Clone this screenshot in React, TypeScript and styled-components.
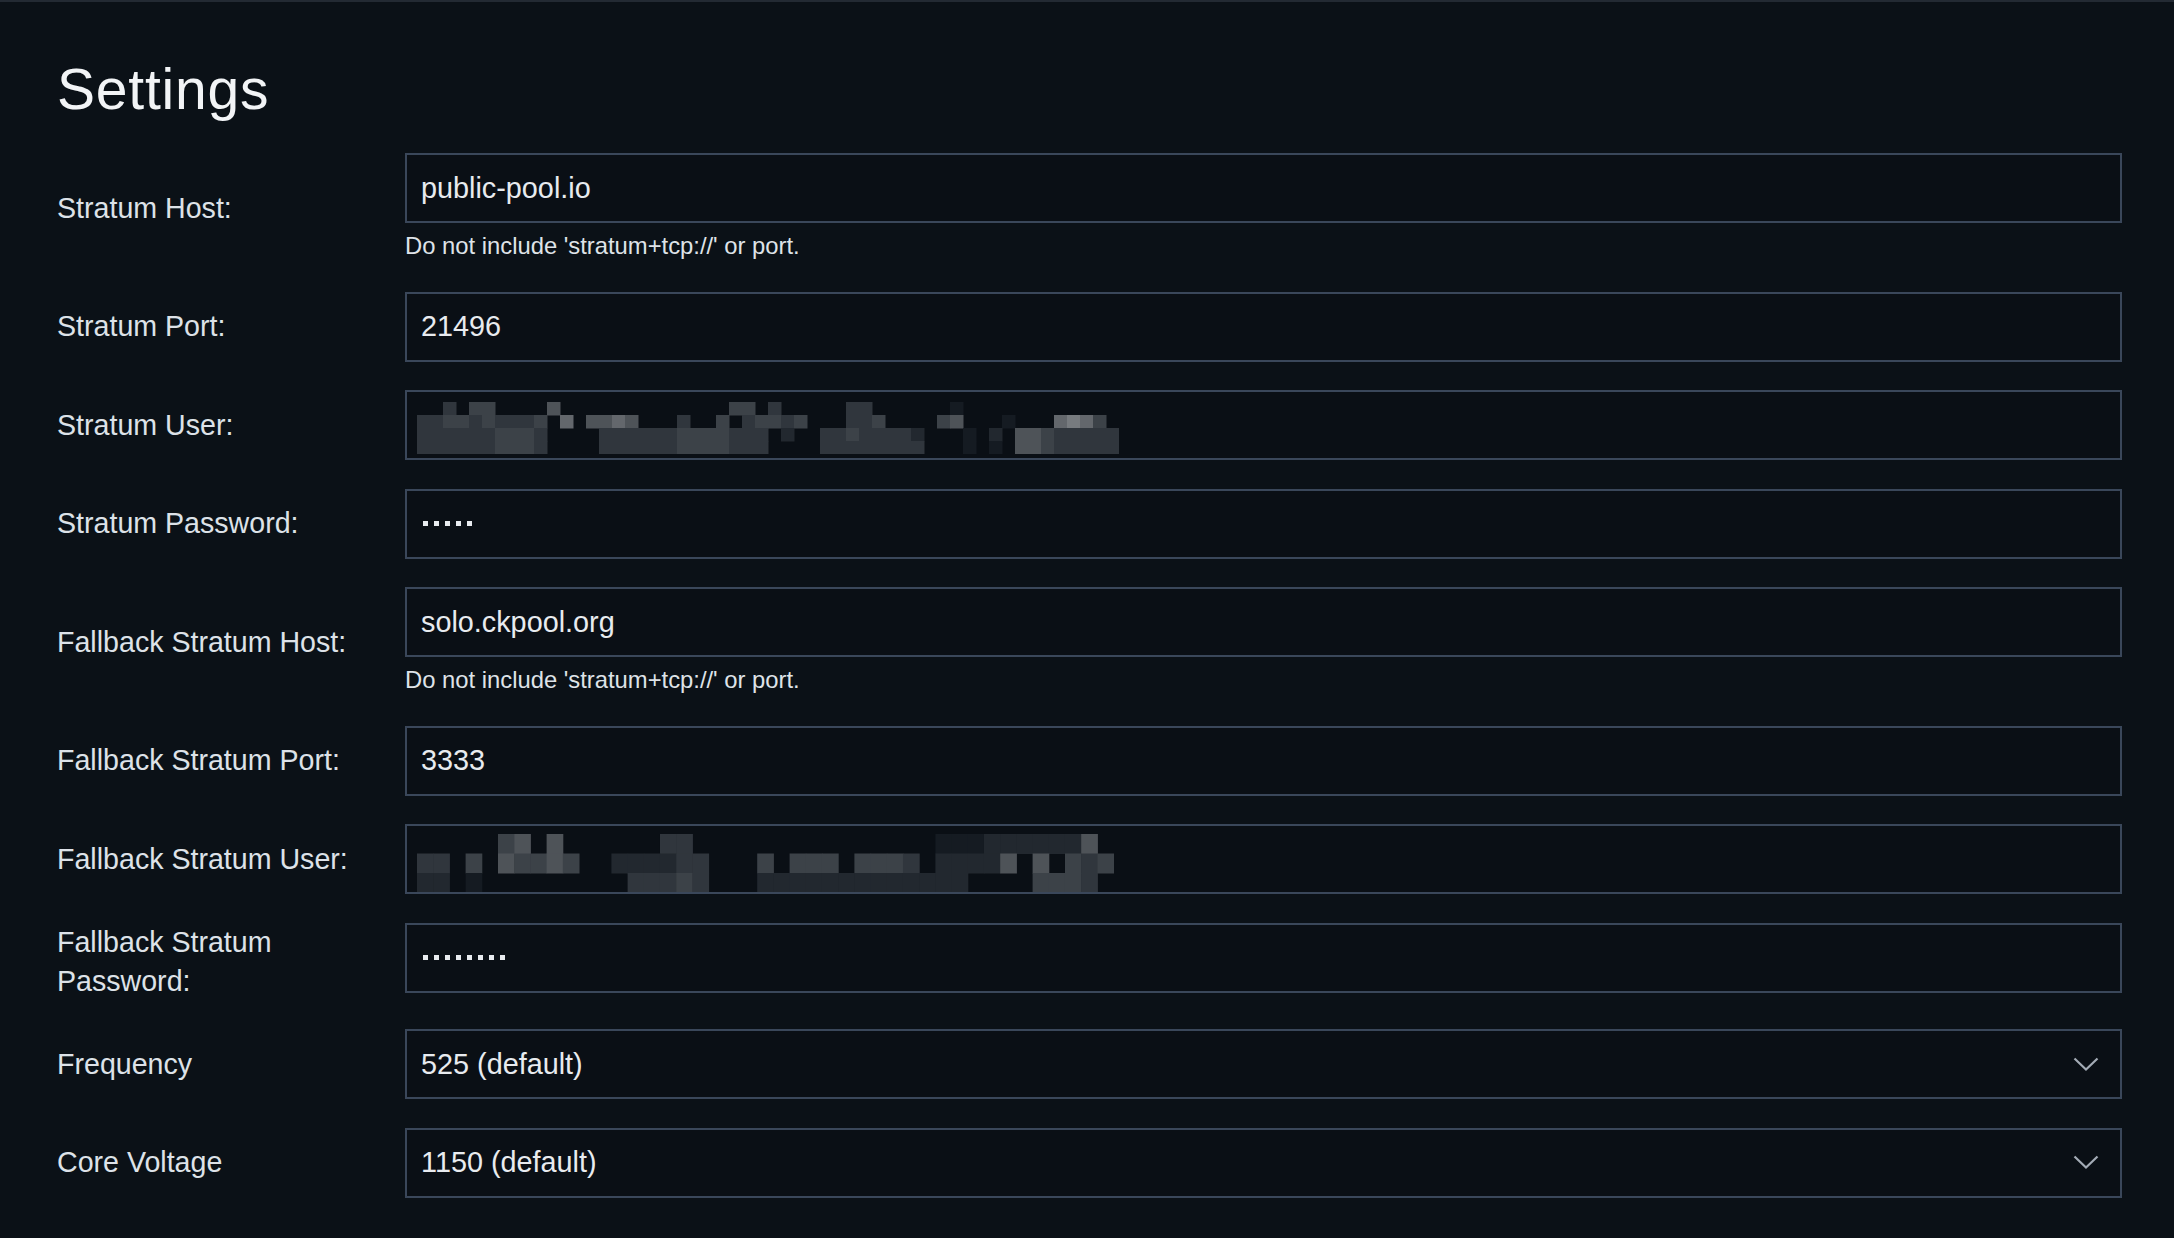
import React from "react";
import styled, { createGlobalStyle } from "styled-components";

const GlobalStyle = createGlobalStyle`
  html, body {
    margin: 0;
    padding: 0;
    background: #0b1117;
  }
  body {
    font-family: "Liberation Sans", Arial, sans-serif;
    color: #e6e9ee;
  }
  * { box-sizing: border-box; }
`;

const Page = styled.main`
  min-height: 100vh;
  border-top: 2px solid #232a33;
  padding: 54px 52px 40px 57px;
  background: #0b1117;
`;

const Title = styled.h1`
  margin: 0 0 30px;
  font-size: 57px;
  line-height: 67px;
  font-weight: 400;
  color: #f2f4f6;
  letter-spacing: 0.8px;
`;

const Form = styled.div`
  display: grid;
  grid-template-columns: 348px 1fr;
  row-gap: 28.5px;
  align-items: center;
`;

const Label = styled.label`
  font-size: 28.6px;
  line-height: 39px;
  color: #dde2e8;
  padding-right: 30px;
`;

const Field = styled.div`
  display: flex;
  flex-direction: column;
  min-width: 0;
  align-self: start;
`;

const Box = styled.div<{ $select?: boolean }>`
  height: 70px;
  display: flex;
  align-items: center;
  justify-content: ${(p) => (p.$select ? "space-between" : "flex-start")};
  border: 2px solid #3a475a;
  background: #0a0f15;
  padding: ${(p) => (p.$select ? "0 21px 0 14px" : "0 14px")};
  overflow: hidden;
`;

const MosaicBox = styled(Box)`
  padding: 0 10px;
`;

const Value = styled.span`
  font-size: 28.8px;
  color: #e8ebef;
  white-space: nowrap;
`;

const Help = styled.small`
  display: block;
  margin-top: 6px;
  font-size: 23.8px;
  line-height: 34px;
  color: #dfe3e8;
`;

const Dots = styled.span`
  display: flex;
  gap: 6px;
  padding-left: 2px;
`;

const Dot = styled.span`
  width: 5px;
  height: 5px;
  background: #e8ebef;
`;

const Chevron = () => (
  <svg width="26" height="15" viewBox="0 0 26 15" fill="none">
    <polyline
      points="1.5,1.5 13,12.5 24.5,1.5"
      stroke="#a3abb5"
      strokeWidth="2.2"
      strokeLinejoin="miter"
    />
  </svg>
);

const SHADES: Record<string, string> = {
  "1": "#151b22",
  "2": "#22282f",
  "3": "#30363d",
  "4": "#3c4248",
  "5": "#4e5358",
  "6": "#63676c",
  "7": "#777b7f",
};

type MosaicProps = { rows: string[]; cols: number; cw: number; ch: number; top: number };

const Mosaic = ({ rows, cols, cw, ch, top }: MosaicProps) => {
  const rects: React.ReactNode[] = [];
  rows.forEach((row, r) => {
    const line = row.padEnd(cols, " ").slice(0, cols);
    for (let c = 0; c < cols; c++) {
      const k = line[c];
      if (SHADES[k]) {
        rects.push(
          <rect key={`${r}-${c}`} x={c * cw} y={r * ch} width={cw + 0.5} height={ch + 0.5} fill={SHADES[k]} />
        );
      }
    }
  });
  return (
    <svg
      width={cols * cw}
      height={rows.length * ch}
      viewBox={`0 0 ${cols * cw} ${rows.length * ch}`}
      style={{ marginTop: top }}
    >
      {rects}
    </svg>
  );
};

const USER_ROWS = [
  "  3 44    5             44 3     33      1          ",
  "3344343334 6 5565   3  4 34434   334    45   1   6764",
  "3333334443    3333334444333 2  33433332   1 2 55433333",
  "3333334443    3333334444333    33333333   1 1 55433333",
];

const FB_USER_ROWS = [
  "     45 5      33               1112222225 3",
  "33 4 54454  222233   4 444 4443 22225 5 434",
  "22 1         33343   2222222222222    4443 ",
];

type Row =
  | { label: string; kind: "text"; value: string; help?: string }
  | { label: string; kind: "password"; count: number }
  | { label: string; kind: "mosaic"; rows: string[]; cols: number; cw: number; ch: number; top: number }
  | { label: string; kind: "select"; value: string };

const HELP = "Do not include 'stratum+tcp://' or port.";

const ROWS: Row[] = [
  { label: "Stratum Host:", kind: "text", value: "public-pool.io", help: HELP },
  { label: "Stratum Port:", kind: "text", value: "21496" },
  { label: "Stratum User:", kind: "mosaic", rows: USER_ROWS, cols: 54, cw: 13, ch: 13, top: 6 },
  { label: "Stratum Password:", kind: "password", count: 5 },
  { label: "Fallback Stratum Host:", kind: "text", value: "solo.ckpool.org", help: HELP },
  { label: "Fallback Stratum Port:", kind: "text", value: "3333" },
  { label: "Fallback Stratum User:", kind: "mosaic", rows: FB_USER_ROWS, cols: 43, cw: 16.2, ch: 19.5, top: 8 },
  { label: "Fallback Stratum Password:", kind: "password", count: 8 },
  { label: "Frequency", kind: "select", value: "525 (default)" },
  { label: "Core Voltage", kind: "select", value: "1150 (default)" },
];

const renderField = (row: Row) => {
  switch (row.kind) {
    case "text":
      return (
        <Field>
          <Box>
            <Value>{row.value}</Value>
          </Box>
          {row.help && <Help>{row.help}</Help>}
        </Field>
      );
    case "password":
      return (
        <Field>
          <Box>
            <Dots>
              {Array.from({ length: row.count }).map((_, i) => (
                <Dot key={i} />
              ))}
            </Dots>
          </Box>
        </Field>
      );
    case "mosaic":
      return (
        <Field>
          <MosaicBox>
            <Mosaic rows={row.rows} cols={row.cols} cw={row.cw} ch={row.ch} top={row.top} />
          </MosaicBox>
        </Field>
      );
    case "select":
      return (
        <Field>
          <Box $select>
            <Value>{row.value}</Value>
            <Chevron />
          </Box>
        </Field>
      );
  }
};

export default function App() {
  return (
    <>
      <GlobalStyle />
      <Page>
        <Title>Settings</Title>
        <Form>
          {ROWS.map((row) => (
            <React.Fragment key={row.label}>
              <Label>{row.label}</Label>
              {renderField(row)}
            </React.Fragment>
          ))}
        </Form>
      </Page>
    </>
  );
}
